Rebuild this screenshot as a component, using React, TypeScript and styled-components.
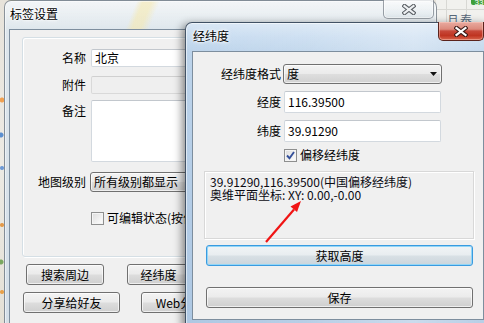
import React from "react";
import styled, { createGlobalStyle } from "styled-components";

const UI_FONT = `"Noto Sans CJK SC", "Liberation Sans", sans-serif`;

const GlobalStyle = createGlobalStyle`
  html, body { margin: 0; padding: 0; background: #e9e6df; }
  body { font-family: ${UI_FONT}; font-size: 12px; color: #000; overflow: hidden; }
  * { box-sizing: border-box; }
`;

const Desktop = styled.div`
  position: relative;
  width: 484px;
  height: 323px;
  overflow: hidden;
  background:
    radial-gradient(circle at 2px 100px, #f0a050 0 2px, transparent 3px),
    radial-gradient(circle at 1px 135px, #5b8fd0 0 2px, transparent 3px),
    radial-gradient(circle at 2px 168px, #6d9ad6 0 1.5px, transparent 2.5px),
    radial-gradient(circle at 2px 225px, #e39a4a 0 1.5px, transparent 2.5px),
    radial-gradient(circle at 1px 262px, #7aa860 0 2px, transparent 3px),
    radial-gradient(circle at 2px 292px, #e8a048 0 1.5px, transparent 2.5px),
    linear-gradient(180deg, #e7e3da, #eceae4 50%, #e4e0d6);
`;

const MapCorner = styled.div`
  position: absolute;
  left: 436px;
  top: 0;
  width: 48px;
  height: 24px;
  background:
    linear-gradient(90deg, transparent 10px, #d8d8d4 10px 11px, transparent 11px 30px, #d8d8d4 30px 31px, transparent 31px),
    linear-gradient(180deg, transparent 9px, #d8d8d4 9px 10px, transparent 10px),
    #f1f1ee;
`;

const MapBadge = styled.div`
  position: absolute;
  left: 471px;
  top: -7px;
  width: 16px;
  height: 12px;
  border-radius: 2px;
  background: #3f9f3a;
  color: #fff;
  font-family: "Liberation Sans", sans-serif;
  font-size: 8px;
  line-height: 19px;
  text-align: center;
`;

const MapLabel = styled.div`
  position: absolute;
  left: 447px;
  top: 13px;
  font-size: 12px;
  line-height: 14px;
  color: #56687a;
  letter-spacing: 1px;
`;

const Frame = styled.div<{
  $left: number;
  $top: number;
  $width: number;
  $height: number;
  $active?: boolean;
}>`
  position: absolute;
  left: ${(p) => p.$left}px;
  top: ${(p) => p.$top}px;
  width: ${(p) => p.$width}px;
  height: ${(p) => p.$height}px;
  display: flex;
  flex-direction: column;
  border: 1px solid ${(p) => (p.$active ? "rgba(35,50,68,0.8)" : "rgba(75,85,95,0.6)")};
  border-radius: 7px 7px 0 0;
  background: ${(p) =>
    p.$active
      ? `linear-gradient(90deg, rgba(255,255,255,0) 0, rgba(255,255,255,0.12) 40%, rgba(255,255,255,0.35) 75%, rgba(255,255,255,0.1) 100%),
         linear-gradient(180deg, #d9e7f5 0, #c8dcf0 14px, #bcd3ea 30px, #b3cce6 60%, #aec8e3 100%)`
      : `linear-gradient(112deg, transparent 122px, rgba(246,232,170,0.55) 128px, rgba(246,232,170,0.55) 136px, transparent 144px),
         linear-gradient(180deg, rgba(255,255,255,0.5) 0, rgba(255,255,255,0) 30px),
         linear-gradient(180deg, #e6ecef 0, #dde6ec 30px, #d3dee8 100%)`};
  box-shadow: ${(p) =>
    p.$active
      ? "inset 0 0 0 1px rgba(255,255,255,0.55), -3px 2px 9px rgba(0,0,0,0.45)"
      : "inset 0 0 0 1px rgba(255,255,255,0.5)"};
`;

const TitleBar = styled.div<{ $padLeft: number; $padRight: number }>`
  display: flex;
  align-items: flex-start;
  height: 28px;
  flex: none;
  padding-left: ${(p) => p.$padLeft}px;
  padding-right: ${(p) => p.$padRight}px;
`;

const TitleText = styled.div`
  margin-top: 6px;
  font-size: 12px;
  line-height: 14px;
  color: #000;
  text-shadow: 0 0 5px #fff, 0 0 3px #fff, 0 0 2px rgba(255,255,255,0.9);
`;

const CloseButton = styled.div<{ $active?: boolean }>`
  margin-left: auto;
  margin-top: -1px;
  width: ${(p) => (p.$active ? 46 : 51)}px;
  height: ${(p) => (p.$active ? 19 : 19)}px;
  display: flex;
  align-items: center;
  justify-content: center;
  border: 1px solid ${(p) => (p.$active ? "#5a231c" : "rgba(80,90,100,0.55)")};
  border-top: none;
  border-radius: 0 0 5px 5px;
  background: ${(p) =>
    p.$active
      ? "linear-gradient(180deg, #e9aba0 0%, #dc8a7c 40%, #c7483a 50%, #bf3421 75%, #d8644c 100%)"
      : "linear-gradient(180deg, rgba(255,255,255,0.55) 0%, rgba(240,244,246,0.45) 50%, rgba(215,225,230,0.45) 100%)"};
  box-shadow: ${(p) =>
    p.$active
      ? "inset 0 0 0 1px rgba(255,210,200,0.45)"
      : "inset 0 0 0 1px rgba(255,255,255,0.55)"};
`;

const Client = styled.div<{ $m: string }>`
  flex: 1;
  margin: ${(p) => p.$m};
  border: 1px solid #7d8e9e;
  background: #f0f0f0;
  display: flex;
  flex-direction: column;
  overflow: hidden;
`;

/* ---------- window 1 ---------- */

const Client1Body = styled.div`
  padding: 7px 0 0 12px;
  display: flex;
  flex-direction: column;
`;

const GroupBox = styled.div`
  width: 405px;
  height: 220px;
  border: 1px solid #d5dfe5;
  border-radius: 3px;
  box-shadow: inset 1px 1px 0 #fff, 1px 1px 0 #fff;
  padding-top: 11px;
  display: flex;
  flex-direction: column;
`;

const Row = styled.div<{ $mt?: number; $top?: boolean; $h?: number }>`
  display: flex;
  align-items: ${(p) => (p.$top ? "flex-start" : "center")};
  margin-top: ${(p) => p.$mt ?? 0}px;
  height: ${(p) => (p.$h ? `${p.$h}px` : "auto")};
  flex: none;
`;

const Label = styled.div<{ $w: number; $gap: number; $pt?: number }>`
  width: ${(p) => p.$w}px;
  margin-right: ${(p) => p.$gap}px;
  padding-top: ${(p) => p.$pt ?? 0}px;
  text-align: right;
  font-size: 12px;
  line-height: 14px;
  white-space: nowrap;
  flex: none;
`;

const TextBox = styled.div<{ $w: number; $h: number; $ml?: number; $disabled?: boolean }>`
  width: ${(p) => p.$w}px;
  height: ${(p) => p.$h}px;
  margin-left: ${(p) => p.$ml ?? 0}px;
  flex: none;
  display: flex;
  align-items: ${(p) => (p.$h > 30 ? "flex-start" : "center")};
  padding: 0 3px;
  border: 1px solid ${(p) => (p.$disabled ? "#d9d9d9" : "#d3d9df")};
  border-top-color: ${(p) => (p.$disabled ? "#d0d0d0" : "#c2c7cd")};
  border-radius: 2px;
  background: ${(p) => (p.$disabled ? "#efefef" : "#fff")};
  font-size: 12px;
  line-height: 14px;
  white-space: nowrap;
  overflow: hidden;
`;

const Combo = styled.div<{ $w: number }>`
  width: ${(p) => p.$w}px;
  height: 20px;
  flex: none;
  display: flex;
  align-items: center;
  justify-content: space-between;
  padding: 0 3px 0 3px;
  border: 1px solid #707070;
  border-radius: 3px;
  background: linear-gradient(180deg, #f3f3f3 0%, #ebebeb 48%, #dedede 52%, #d1d1d1 100%);
  box-shadow: inset 0 0 0 1px rgba(255, 255, 255, 0.65);
  font-size: 12px;
  line-height: 14px;
  white-space: nowrap;
  overflow: hidden;
`;

const CheckBox = styled.div<{ $ml?: number }>`
  width: 13px;
  height: 13px;
  margin-left: ${(p) => p.$ml ?? 0}px;
  flex: none;
  border: 1px solid #8e8f8f;
  background: linear-gradient(135deg, #dcdcdc 0%, #f4f4f4 70%, #ffffff 100%);
  box-shadow: inset 0 0 0 1px #f4f4f4;
  display: flex;
  align-items: center;
  justify-content: center;
`;

const CheckText = styled.span`
  margin-left: 3px;
  font-size: 12px;
  line-height: 14px;
  white-space: nowrap;
`;

const ButtonRow = styled.div<{ $mt: number; $pl: number; $gap: number }>`
  display: flex;
  margin-top: ${(p) => p.$mt}px;
  padding-left: ${(p) => p.$pl}px;
  gap: ${(p) => p.$gap}px;
  flex: none;
`;

const Button = styled.div<{ $w: number; $h?: number; $mt?: number; $ml?: number; $focused?: boolean }>`
  width: ${(p) => p.$w}px;
  height: ${(p) => p.$h ?? 21}px;
  margin-top: ${(p) => p.$mt ?? 0}px;
  margin-left: ${(p) => p.$ml ?? 0}px;
  flex: none;
  display: flex;
  align-items: center;
  justify-content: center;
  border: 1px solid ${(p) => (p.$focused ? "#3a9be0" : "#707070")};
  border-radius: 3px;
  background: ${(p) =>
    p.$focused
      ? "linear-gradient(180deg, #f1f4f6 0%, #e8edf0 48%, #d8e0e5 52%, #cbd5dc 100%)"
      : "linear-gradient(180deg, #f3f3f3 0%, #ebebeb 48%, #dddddd 52%, #cfcfcf 100%)"};
  box-shadow: ${(p) =>
    p.$focused ? "inset 0 0 0 1px #93d6f7" : "inset 0 0 0 1px rgba(255,255,255,0.65)"};
  font-size: 12px;
  line-height: 14px;
  white-space: nowrap;
  overflow: hidden;
`;

/* ---------- window 2 ---------- */

const Client2Body = styled.div`
  padding-top: 12px;
  display: flex;
  flex-direction: column;
`;

const InfoBox = styled.div`
  margin: 9px 0 0 11px;
  width: 270px;
  height: 68px;
  flex: none;
  border: 1px solid #d8d8d8;
  box-shadow: inset 1px 1px 0 #fff, 1px 1px 0 #fff;
  padding: 3px 5px;
  font-size: 12px;
  line-height: 13px;
  white-space: nowrap;
`;

const InfoLine = styled.div`
  color: #0a0a12;
`;

const Annotation = styled.svg`
  position: absolute;
  left: 0;
  top: 0;
  pointer-events: none;
`;

const CloseGlyph = ({ active }: { active?: boolean }) => (
  <svg width="14" height="11" viewBox="0 0 14 11">
    <path
      d="M2.5 2 L11.5 9 M11.5 2 L2.5 9"
      stroke={active ? "#3a1a16" : "#5a5f64"}
      strokeWidth="4.2"
      strokeLinecap="square"
    />
    <path
      d="M2.5 2 L11.5 9 M11.5 2 L2.5 9"
      stroke={active ? "#ffffff" : "#eef1f3"}
      strokeWidth="2.2"
      strokeLinecap="square"
    />
  </svg>
);

const DropArrow = () => (
  <svg width="8" height="5" viewBox="0 0 8 5">
    <path d="M0 0 H7 L3.5 4 Z" fill="#111" />
  </svg>
);

const CheckMark = () => (
  <svg width="9" height="9" viewBox="0 0 9 9">
    <path d="M1 4.5 L3.5 7.2 L8 1" stroke="#34509a" strokeWidth="1.9" fill="none" />
  </svg>
);

export default function App() {
  return (
    <>
      <GlobalStyle />
      <Desktop>
        <MapCorner />
        <MapLabel>旦泰酒店</MapLabel>
        <MapBadge>33</MapBadge>

        {/* 标签设置 window (inactive) */}
        <Frame $left={4} $top={0} $width={433} $height={345}>
          <TitleBar $padLeft={5} $padRight={2}>
            <TitleText>标签设置</TitleText>
            <CloseButton>
              <CloseGlyph />
            </CloseButton>
          </TitleBar>
          <Client $m="0 4px 4px 4px">
            <Client1Body>
              <GroupBox>
                <Row $h={18}>
                  <Label $w={63} $gap={5}>名称</Label>
                  <TextBox $w={330} $h={18}>北京</TextBox>
                </Row>
                <Row $mt={9} $h={18}>
                  <Label $w={63} $gap={5}>附件</Label>
                  <TextBox $w={330} $h={18} $disabled />
                </Row>
                <Row $mt={6} $top>
                  <Label $w={63} $gap={5} $pt={4}>备注</Label>
                  <TextBox $w={330} $h={62} />
                </Row>
                <Row $mt={10}>
                  <Label $w={63} $gap={4}>地图级别</Label>
                  <Combo $w={200}>所有级别都显示</Combo>
                </Row>
                <Row $mt={19}>
                  <Label $w={63} $gap={5} />
                  <CheckBox />
                  <CheckText>可编辑状态(按住拖动标签)</CheckText>
                </Row>
              </GroupBox>
              <ButtonRow $mt={7} $pl={4} $gap={23}>
                <Button $w={78}>搜索周边</Button>
                <Button $w={63}>经纬度</Button>
              </ButtonRow>
              <ButtonRow $mt={7} $pl={1} $gap={21}>
                <Button $w={97}>分享给好友</Button>
                <Button $w={78}>Web分享</Button>
              </ButtonRow>
            </Client1Body>
          </Client>
        </Frame>

        {/* 经纬度 window (active) */}
        <Frame $left={185} $top={22} $width={306} $height={305} $active>
          <TitleBar $padLeft={7} $padRight={6}>
            <TitleText>经纬度</TitleText>
            <CloseButton $active>
              <CloseGlyph active />
            </CloseButton>
          </TitleBar>
          <Client $m="0 6px 6px 6px">
            <Client2Body>
              <Row>
                <Label $w={88} $gap={2}>经纬度格式</Label>
                <Combo $w={159}>
                  <span>度</span>
                  <DropArrow />
                </Combo>
              </Row>
              <Row $mt={7}>
                <Label $w={88} $gap={2}>经度</Label>
                <TextBox $w={157} $h={22} $ml={1}>116.39500</TextBox>
              </Row>
              <Row $mt={7}>
                <Label $w={88} $gap={2}>纬度</Label>
                <TextBox $w={157} $h={22} $ml={1}>39.91290</TextBox>
              </Row>
              <Row $mt={6}>
                <Label $w={88} $gap={2} />
                <CheckBox $ml={1}>
                  <CheckMark />
                </CheckBox>
                <CheckText>偏移经纬度</CheckText>
              </Row>
              <InfoBox>
                <InfoLine>39.91290,116.39500(中国偏移经纬度)</InfoLine>
                <InfoLine>奥维平面坐标: XY: 0.00,-0.00</InfoLine>
              </InfoBox>
              <Button $w={267} $mt={6} $ml={13} $focused>
                获取高度
              </Button>
              <Button $w={267} $mt={21} $ml={13}>
                保存
              </Button>
            </Client2Body>
          </Client>
        </Frame>

        <Annotation width="484" height="323" viewBox="0 0 484 323">
          <line x1="266" y1="242" x2="294" y2="209.5" stroke="#f01414" strokeWidth="2.2" />
          <polygon points="301,201 297,212 290.5,206.5" fill="#f01414" />
        </Annotation>
      </Desktop>
    </>
  );
}
